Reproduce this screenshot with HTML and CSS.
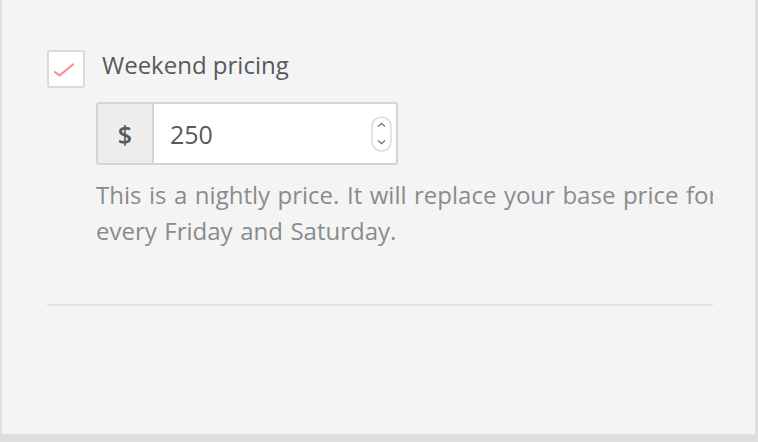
FILE: index.html
```html
<!DOCTYPE html>
<html lang="en">
<head>
<meta charset="utf-8">
<title>Weekend pricing</title>
<link rel="stylesheet" href="styles.css">
</head>
<body>
<div class="panel">
  <div class="content">
    <div class="check-row">
      <span class="checkbox">
        <svg width="22" height="16" viewBox="0 0 22 16"><path d="M2 10 L6.5 13.5 L20 2.5" fill="none" stroke="#fb8a8f" stroke-width="2.2" stroke-linecap="round" stroke-linejoin="round"/></svg>
      </span>
      <span class="label">Weekend pricing</span>
    </div>
    <div class="input-group">
      <span class="addon">$</span>
      <span class="value">250</span>
      <svg class="spinner" width="21" height="36" viewBox="0 0 21 36"><rect x="1" y="1" width="19" height="34" rx="9.5" fill="#fff" stroke="#d2d2d2" stroke-width="1.2"/><path d="M7 10.5 L10.5 7.5 L14 10.5" fill="none" stroke="#7a7a7a" stroke-width="1.4"/><path d="M7 24.5 L10.5 27.5 L14 24.5" fill="none" stroke="#7a7a7a" stroke-width="1.4"/></svg>
    </div>
    <p class="help">This is a nightly price. It will replace your base price for every Friday and Saturday.</p>
    <div class="divider"></div>
  </div>
</div>
</body>
</html>
```
FILE: styles.css
```css
html, body {
  margin: 0;
  padding: 0;
}
body {
  background: #dedede;
  width: 758px;
  height: 442px;
  overflow: hidden;
  font-family: "Open Sans", "Liberation Sans", Arial, sans-serif;
}
.panel {
  margin-left: 2px;
  width: 753px;
  height: 434px;
  background: #f4f4f4;
  box-sizing: border-box;
  padding: 50px 42px 0 45px;
  overflow: hidden;
}
.content {
  overflow: hidden;
}
.check-row {
  display: flex;
  align-items: flex-start;
}
.checkbox {
  flex: none;
  width: 38px;
  height: 38px;
  box-sizing: border-box;
  border: 2px solid #dadada;
  border-radius: 3px;
  background: #fff;
  display: flex;
  align-items: center;
  justify-content: center;
}
.checkbox svg {
  display: block;
  margin-top: 1px;
  margin-left: -4px;
}
.label {
  margin-left: 17px;
  margin-top: -2px;
  font-size: 24px;
  line-height: 34px;
  color: #565a5c;
}
.input-group {
  margin: 14px 0 0 49px;
  width: 302px;
  height: 63px;
  box-sizing: border-box;
  border: 2px solid #d4d4d4;
  border-radius: 3px;
  background: #fff;
  display: flex;
  align-items: center;
}
.addon {
  flex: none;
  width: 56px;
  height: 100%;
  box-sizing: border-box;
  background: #ededeb;
  border-right: 2px solid #d4d4d4;
  display: flex;
  align-items: center;
  justify-content: center;
  font-size: 25px;
  font-weight: 600;
  color: #565a5c;
}
.value {
  flex: 1;
  padding-left: 16px;
  font-size: 25px;
  color: #565a5c;
}
.spinner {
  display: block;
  margin-right: 4px;
}
.help {
  margin: 12px 0 0 49px;
  width: 650px;
  font-size: 24px;
  line-height: 35.5px;
  word-spacing: 1.3px;
  color: #888c8e;
}
.divider {
  margin-top: 56px;
  height: 2px;
  background: #e4e4e4;
}
```
